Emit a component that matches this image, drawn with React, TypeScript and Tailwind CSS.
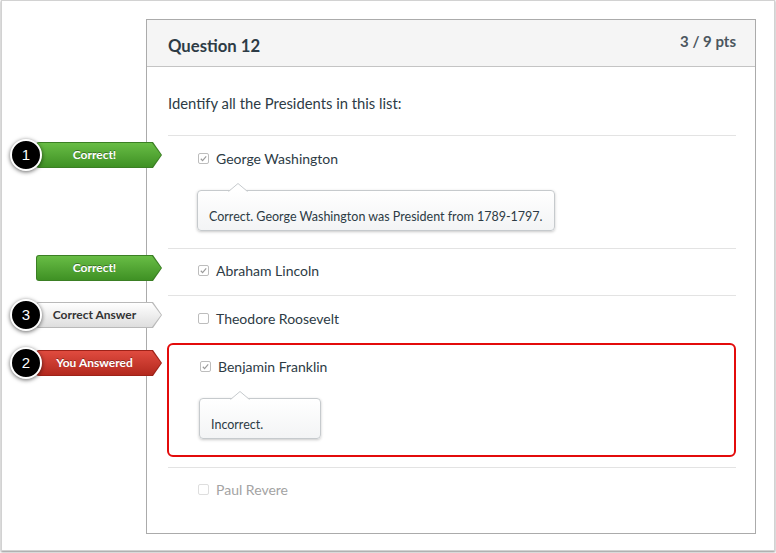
import React from "react";

type Tone = "green" | "red" | "gray";

const tones: Record<Tone, { edge: string; fill: string; text: string }> = {
  green: {
    edge: "bg-[#3b7f24]",
    fill: "bg-linear-to-b from-[#68bd45] to-[#3f9124]",
    text: "text-white [text-shadow:0_-1px_0_rgba(0,0,0,0.35)]",
  },
  red: {
    edge: "bg-[#9e2218]",
    fill: "bg-linear-to-b from-[#e04b3f] to-[#b3291e]",
    text: "text-white [text-shadow:0_-1px_0_rgba(0,0,0,0.35)]",
  },
  gray: {
    edge: "bg-[#b9b9b9]",
    fill: "bg-linear-to-b from-white to-[#dedede]",
    text: "text-[#333]",
  },
};

const chevron = "[clip-path:polygon(0_0,calc(100%-9px)_0,100%_50%,calc(100%-9px)_100%,0_100%)]";

function Annotation({ tone, label, num, className }: { tone: Tone; label: string; num?: number; className: string }) {
  const t = tones[tone];
  return (
    <div className={`absolute flex items-center ${className}`}>
      <div className="relative z-10 w-[32px] h-[32px]">
        {num && (
          <div className="w-[32px] h-[32px] rounded-full bg-black border-2 border-white shadow-[0_1px_4px_rgba(0,0,0,0.6)] flex items-center justify-center text-white text-[15px] font-['Liberation_Sans',sans-serif]">
            {num}
          </div>
        )}
      </div>
      <div className={`-ml-[6px] w-[126px] h-[26px] p-px rounded-l-[3px] ${t.edge} ${chevron}`}>
        <div
          className={`h-full rounded-l-[2px] ${t.fill} ${t.text} ${chevron} flex items-center justify-center pr-[9px] text-[12px] font-bold`}
        >
          {label}
        </div>
      </div>
    </div>
  );
}

function Checkbox({ checked, faded }: { checked?: boolean; faded?: boolean }) {
  return (
    <span
      className={`w-[11px] h-[11px] rounded-[2px] border bg-white flex items-center justify-center ${
        faded ? "border-[#dedede]" : "border-[#bdbdbd]"
      }`}
    >
      {checked && (
        <svg viewBox="0 0 10 10" className="w-[9px] h-[9px]">
          <path d="M2 5.3l2 2.1 4-4.8" fill="none" stroke="#9b9b9b" strokeWidth="1.3" />
        </svg>
      )}
    </span>
  );
}

function Option({ label, checked, faded }: { label: string; checked?: boolean; faded?: boolean }) {
  return (
    <div className="flex items-center h-[20px] pl-[30px] gap-[7px]">
      <Checkbox checked={checked} faded={faded} />
      <span className={`text-[14px] ${faded ? "text-[#a3a3a3]" : "text-[#2d3b45]"}`}>{label}</span>
    </div>
  );
}

function Tip({ children, className = "" }: { children: React.ReactNode; className?: string }) {
  return (
    <div
      className={`relative ml-[29px] mt-[22px] inline-block rounded-[4px] border border-[#c6cacd] bg-linear-to-b from-white to-[#f3f4f5] shadow-[0_1px_3px_rgba(0,0,0,0.22)] px-[11px] pt-[16px] pb-[3px] text-[12.5px] leading-[20px] text-[#2d3b45] ${className}`}
    >
      <svg className="absolute left-[30px] -top-[8px]" width="20" height="9" viewBox="0 0 20 9">
        <path d="M0 9 L10 0.5 L20 9 Z" fill="#ffffff" />
        <path d="M0.5 8.5 L10 0.5 L19.5 8.5" fill="none" stroke="#c6cacd" strokeWidth="1" />
      </svg>
      {children}
    </div>
  );
}

export default function App() {
  return (
    <div className="w-[776px] h-[553px] bg-white font-['Lato',sans-serif] overflow-hidden">
      <div className="ml-px w-[774px] h-[551px] border border-[#d2d2d2] shadow-[0_1px_2px_rgba(0,0,0,0.45)] bg-white">
        <div className="ml-[144px] mt-[18px] w-[610px] h-[515px] border border-[#ababab]">
          <div className="h-[47px] bg-[#f5f5f5] border-b border-[#c4c4c4] flex justify-between pl-[21px] pr-[19px]">
            <h2 className="pt-[16px] text-[16.7px] leading-[20px] font-bold text-[#2d3b45]">Question 12</h2>
            <span className="pt-[11px] text-[15px] leading-[20px] font-bold text-[#4b565e]">3 / 9 pts</span>
          </div>

          <div className="pl-[21px] pr-[19px] pt-[26px]">
            <p className="text-[14.8px] leading-[20px] text-[#2d3b45] mb-[22px]">Identify all the Presidents in this list:</p>

            <div className="relative border-t border-[#e3e3e3] pt-[12px] pb-[17px]">
              <Annotation tone="green" label="Correct!" num={1} className="-left-[158px] top-[3px]" />
              <Option label="George Washington" checked />
              <Tip>Correct. George Washington was President from 1789-1797.</Tip>
            </div>

            <div className="relative border-t border-[#e3e3e3] pt-[11px] pb-[15px]">
              <Annotation tone="green" label="Correct!" className="-left-[158px] top-[3px]" />
              <Option label="Abraham Lincoln" checked />
            </div>

            <div className="relative border-t border-[#e3e3e3] pt-[12px] pb-[15px]">
              <Annotation tone="gray" label="Correct Answer" num={3} className="-left-[158px] top-[3px]" />
              <Option label="Theodore Roosevelt" />
            </div>

            <div className="relative -ml-px border-2 border-[#e30b0b] rounded-[6px] pl-px pt-[11px] pb-[16px]">
              <Annotation tone="red" label="You Answered" num={2} className="-left-[159px] top-[2px]" />
              <Option label="Benjamin Franklin" checked />
              <Tip className="w-[122px]">Incorrect.</Tip>
            </div>

            <div className="mt-[10px] border-t border-[#e3e3e3] pt-[11px]">
              <Option label="Paul Revere" faded />
            </div>
          </div>
        </div>
      </div>
    </div>
  );
}
